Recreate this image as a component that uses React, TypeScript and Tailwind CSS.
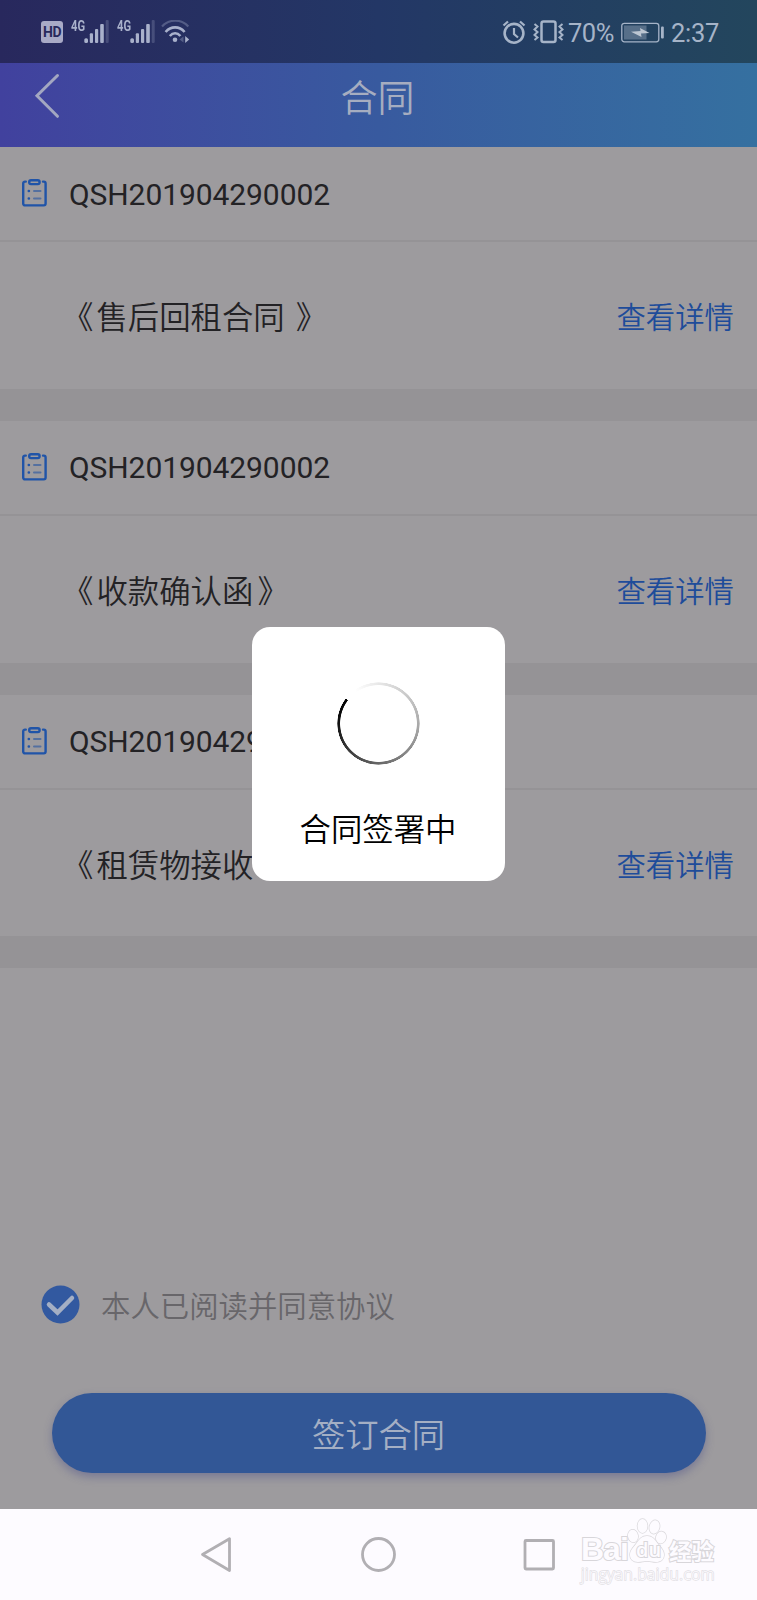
const contracts = [
  { no: "QSH201904290002", name: "售后回租合同 ", closed: true },
  { no: "QSH201904290002", name: "收款确认函", closed: true },
  { no: "QSH201904290002", name: "租赁物接收", closed: false },
];

function Signal() {
  return (
    <div className="flex h-[24px] w-[38px]">
      <span className="-mt-px -ml-px w-[13px] origin-left scale-x-[0.8] font-['Roboto'] text-[14px] leading-[14px] font-bold">
        4G
      </span>
      <svg width="26" height="24" viewBox="0 0 26 24" fill="currentColor" className="shrink-0">
        <rect x="0.3" y="18.3" width="3.7" height="4.7" rx="1.5" />
        <rect x="5.8" y="13.3" width="3.2" height="9.7" rx="1" />
        <rect x="11" y="9" width="3.2" height="14" rx="1" />
        <rect x="16.2" y="4" width="3.6" height="19" rx="1" />
        <rect x="21.7" y="0" width="3" height="23" rx="1" opacity="0.25" />
      </svg>
    </div>
  );
}

function StatusBar() {
  return (
    <div className="flex h-[63px] items-start justify-between bg-linear-to-r from-[#28285d] via-[#233766] to-[#23465d] pl-[41px] pr-[37px] font-normal text-[#a9b1cb]">
      <div className="mt-[20px] flex h-[24px]">
        <span className="mt-px flex h-[22px] w-[22px] items-center justify-center rounded-[3px] bg-[#a9aac6] font-['Roboto'] text-[14px] font-bold tracking-[-0.5px] text-[#28295c]">
          HD
        </span>
        <div className="ml-[9px] flex gap-[8px]">
          <Signal />
          <Signal />
        </div>
        <svg width="29" height="24" viewBox="0 0 29 24" fill="none" stroke="currentColor" className="ml-[5px]">
          <path d="M1 6.4C8.5-1.2 20-1.2 27.3 6.4" strokeWidth="2.2" opacity="0.35" />
          <path d="M4.6 12C10 5.8 18.2 5.8 23.6 12" strokeWidth="2.6" />
          <path d="M8.8 16C12 12.4 16.2 12.4 19.4 16" strokeWidth="2.6" />
          <circle cx="14" cy="19.8" r="2.3" fill="currentColor" stroke="none" />
          <path d="M22.5 16.5v6l-4-3z" fill="currentColor" stroke="none" opacity="0.35" />
          <path d="M24.2 16v7l4-3.5z" fill="currentColor" stroke="none" />
        </svg>
      </div>
      <div className="mt-[20px] flex h-[24px] items-center text-[#a6b4c8]">
        <svg width="24" height="24" viewBox="0 0 24 24" fill="none" stroke="currentColor" strokeWidth="2.6">
          <circle cx="12" cy="13.3" r="9.4" />
          <path d="M12 8v6l4 3.5" strokeWidth="2.2" />
          <path d="M1.5 5.5 6 1.5M22.5 5.5 18 1.5" strokeWidth="2.3" />
        </svg>
        <svg width="31" height="24" viewBox="0 0 31 24" fill="none" stroke="currentColor" className="ml-[7px]">
          <rect x="8.5" y="1.500" width="14" height="20.5" rx="2" strokeWidth="2.5" />
          <path d="m1.500 4 3 2.500-3 3 3 2.500-3 3 3 2.500-3 2.500M29.500 4l-3 2.500 3 3-3 2.500 3 3-3 2.500 3 2.500" strokeWidth="2" />
        </svg>
        <span className="mt-[3px] ml-[4px] w-[46px] font-['Roboto'] text-[25.5px] leading-none tracking-[-0.5px]">70%</span>
        <svg width="43" height="21" viewBox="0 0 43 21" fill="none" stroke="currentColor" className="ml-[7px]">
          <rect x="0.8" y="1.3" width="37" height="18.5" rx="2.5" strokeWidth="1.3" />
          <rect x="3" y="3.5" width="22.5" height="14" fill="currentColor" stroke="none" opacity="0.4" />
          <path d="M10 9.800 19.500 9 19 6l9.500 5-8.500.5.5 3.500z" fill="#bcc6d2" stroke="none" />
          <rect x="40" y="4.5" width="2.8" height="12" rx="1" fill="currentColor" stroke="none" />
        </svg>
        <span className="mt-[3px] ml-[7px] w-[49px] font-['Roboto'] text-[25.5px] leading-none tracking-[-0.3px]">2:37</span>
      </div>
    </div>
  );
}

function ClipboardIcon() {
  return (
    <svg width="26" height="28" viewBox="0 0 26 28" fill="none" stroke="#2054a8" strokeWidth="2.4" strokeLinecap="round">
      <path d="M4.8 2.600H4A1.800 1.800 0 0 0 2.200 4.400V24.600a1.800 1.800 0 0 0 1.800 1.800h18.800a1.800 1.800 0 0 0 1.800-1.800V4.400a1.800 1.800 0 0 0-1.800-1.800H22" />
      <rect x="8.2" y="1.3" width="10.4" height="3.8" rx="1.8" />
      <path d="M13 12h6.500M13 19.500h6.500" stroke="#5470a0" strokeWidth="2" />
      <path d="M7.800 12h.1M7.800 19.500h.1" strokeWidth="2.6" />
    </svg>
  );
}

function Watermark() {
  return (
    <div className="flex flex-col font-['Open_Sans'] text-[#fdfbff] [-webkit-text-stroke:2px_#d8d6da] [paint-order:stroke_fill]">
      <div className="flex h-[46px] items-end">
        <span className="w-[46px] font-['Liberation_Sans'] text-[32px] leading-[28px] font-bold tracking-[-1px]">Bai</span>
        <div className="relative h-[46px] w-[42px]">
          <svg width="40" height="46" viewBox="0 0 40 46" fill="#fdfbff" stroke="#dad8dc" strokeWidth="1.4">
            <ellipse cx="6" cy="19" rx="5" ry="6.3" transform="rotate(-10 6 19)" />
            <ellipse cx="15.5" cy="9" rx="5" ry="7" />
            <ellipse cx="27.5" cy="10" rx="5" ry="6.8" transform="rotate(15 27.5 10)" />
            <ellipse cx="34" cy="20.5" rx="5" ry="6" transform="rotate(15 34 20.5)" />
            <path d="M20 19c6 0 8 4 11 8s6 6 6 11c0 5-4 7-8 7-4 0-5-1-9-1s-5 1-9 1c-5 0-8-3-8-7 0-5 3-7 6-11s5-8 11-8z" />
          </svg>
          <span className="absolute left-[9px] top-[22px] text-[20px] leading-[22px] font-semibold">du</span>
        </div>
        <span className="font-['Noto_Sans_CJK_SC'] text-[22.5px] leading-[26px] font-bold">经验</span>
      </div>
      <span className="mt-[3px] text-[15.5px] leading-[16px] tracking-[0.5px] [-webkit-text-stroke:1.4px_#e2e0e4]">
        jingyan.baidu.com
      </span>
    </div>
  );
}

export default function App() {
  return (
    <main className="relative flex h-[1600px] w-[757px] flex-col overflow-hidden bg-[#9d9b9e] font-['Noto_Sans_CJK_SC',sans-serif] font-[350]">
      <StatusBar />
      <header className="grid h-[84px] grid-cols-[120px_1fr_120px] bg-linear-to-r from-[#41419e] via-[#385a9f] to-[#3570a0]">
        <svg width="26" height="46" viewBox="0 0 26 46" fill="none" stroke="#a3a7c1" strokeWidth="3" strokeLinecap="round" className="ml-[34px] mt-[10px]">
          <path d="M23.500 2.500 3 22.800l20.500 20.500" />
        </svg>
        <h1 className="-ml-[2px] mt-[7px] text-center text-[37px] leading-[52px] text-[#a6adc0]">合同</h1>
      </header>

      {contracts.map((item, i) => (
        <section key={i} className="h-[273.8px] shrink-0 border-b-[32px] border-[#959396]">
          <div className="flex h-[95px] items-center border-b-2 border-[#959396] pb-px pl-[21px]">
            <ClipboardIcon />
            <span className="ml-[22px] mt-[2px] font-['Roboto'] text-[30px] font-normal tracking-[-0.08px] text-[#232225]">
              {item.no}
            </span>
          </div>
          <div className="flex h-[147px] items-center justify-between pl-[62px] pr-[23px]">
            <span className="whitespace-pre text-[31.4px] text-[#232225]">
              <span className="tracking-[3px]">《</span>
              {item.name}
              {item.closed && <span className="ml-[4px]">》</span>}
            </span>
            <a className="text-[29.4px] text-[#1e4c9a]">查看详情</a>
          </div>
        </section>
      ))}

      <div className="mt-[316.600px] flex h-[40px] items-center pl-[41px]">
        <svg width="39" height="39" viewBox="0 0 39 39">
          <circle cx="19.5" cy="19.5" r="19" fill="#3259a0" />
          <path d="m8 19.500 8.500 8L31 13" fill="none" stroke="#a4afc4" strokeWidth="4.5" strokeLinecap="round" />
        </svg>
        <span className="-mt-[2px] ml-[21px] text-[29.4px] text-[#68666a]">本人已阅读并同意协议</span>
      </div>
      <button className="mx-[51.5px] mt-[68px] h-[80px] shrink-0 rounded-full bg-[#325796] pb-px text-[33.3px] text-[#a4afc4] shadow-[0_4px_8px_rgba(65,70,135,0.4)]">
        签订合同
      </button>

      <nav className="mt-auto flex h-[91px] shrink-0 bg-[#fdfbff] pl-[200px]">
        <svg width="357" height="91" viewBox="0 0 357 91" fill="none" stroke="#b1afb3" strokeWidth="2.8" strokeLinejoin="round" className="shrink-0">
          <path d="M29.500 29.800v31.700L2.500 45.500z" />
          <circle cx="178.5" cy="45.500" r="16" />
          <rect x="325" y="31.500" width="28.5" height="28.5" rx="1" />
        </svg>
        <div className="ml-[24px] mt-[8px]">
          <Watermark />
        </div>
      </nav>

      {/* loading dialog */}
      <div className="absolute left-[252px] top-[627px] flex h-[254px] w-[253px] flex-col items-center rounded-[18px] bg-white">
        <div className="mt-[55px] flex h-[83px] w-[83px] rotate-[-55deg]">
          <div className="h-full w-full rounded-full bg-[conic-gradient(from_20deg,#fff,#aaa_35%,#666_60%,#111_85%,#000_95%,#fff_95%)] [mask:radial-gradient(closest-side,transparent_38px,#000_38.7px,#000_40.8px,transparent_41.5px)]" />
        </div>
        <p className="-ml-px mt-[40px] text-[31.4px] leading-[46px] text-black">合同签署中</p>
      </div>
    </main>
  );
}
